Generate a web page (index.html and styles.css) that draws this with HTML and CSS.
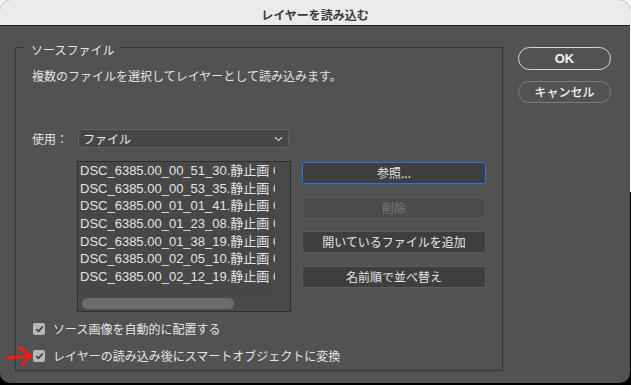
FILE: index.html
```html
<!DOCTYPE html>
<html lang="ja">
<head>
<meta charset="utf-8">
<title>レイヤーを読み込む</title>
<link rel="stylesheet" href="styles.css">
</head>
<body>
<div class="window">
  <header class="titlebar">レイヤーを読み込む</header>
  <div class="content">
    <fieldset class="source">
      <legend class="legend">ソースファイル</legend>
      <p class="desc">複数のファイルを選択してレイヤーとして読み込みます。</p>
      <div class="use-row">
        <span class="use-label">使用：</span>
        <div class="select">
          <span>ファイル</span>
          <svg class="chevron" width="9" height="6" viewBox="0 0 9 6"><path d="M1 1.2 L4.5 4.5 L8 1.2" fill="none" stroke="#cfcfcf" stroke-width="1.2"/></svg>
        </div>
      </div>
      <div class="files-row">
        <div class="filelist">
          <ul class="rows">
            <li>DSC_6385.00_00_51_30.静止画 001.jpg</li>
            <li>DSC_6385.00_00_53_35.静止画 002.jpg</li>
            <li>DSC_6385.00_01_01_41.静止画 003.jpg</li>
            <li>DSC_6385.00_01_23_08.静止画 004.jpg</li>
            <li>DSC_6385.00_01_38_19.静止画 005.jpg</li>
            <li>DSC_6385.00_02_05_10.静止画 006.jpg</li>
            <li>DSC_6385.00_02_12_19.静止画 007.jpg</li>
          </ul>
          <div class="vtrack"></div>
          <div class="htrack"><div class="thumb"></div></div>
        </div>
        <div class="file-buttons">
          <button class="btn focus">参照...</button>
          <button class="btn disabled">削除</button>
          <button class="btn">開いているファイルを追加</button>
          <button class="btn">名前順で並べ替え</button>
        </div>
      </div>
      <div class="checks">
        <label class="check"><span class="box"><svg width="9" height="8" viewBox="0 0 9 8"><path d="M1.2 4.2 L3.5 6.3 L7.8 1.5" fill="none" stroke="#3f3f3f" stroke-width="1.8"/></svg></span>ソース画像を自動的に配置する</label>
        <label class="check"><span class="box"><svg width="9" height="8" viewBox="0 0 9 8"><path d="M1.2 4.2 L3.5 6.3 L7.8 1.5" fill="none" stroke="#3f3f3f" stroke-width="1.8"/></svg></span>レイヤーの読み込み後にスマートオブジェクトに変換</label>
      </div>
    </fieldset>
    <div class="actions">
      <button class="pill ok">OK</button>
      <button class="pill cancel">キャンセル</button>
    </div>
  </div>
  <svg class="arrow" width="30" height="24" viewBox="0 0 30 24"><path d="M2 14 C10 13.5 18 12.5 26 11.5 M14 3.5 C18 6 22 9 26.5 11.5 C23 14 20 17 17.5 21" fill="none" stroke="#f21b1b" stroke-width="3" stroke-linecap="round" stroke-linejoin="round"/></svg>
</div>
</body>
</html>
```

FILE: styles.css
```css
* { box-sizing: border-box; }
html, body {
  margin: 0;
  padding: 0;
  width: 631px;
  height: 385px;
  overflow: hidden;
  background: linear-gradient(#f4f4f4 0 50%, #000 50% 100%);
}
body {
  font-family: "Noto Sans CJK JP", "Liberation Sans", sans-serif;
  color: #e2e2e2;
}
.window {
  position: relative;
  width: 630px;
  height: 383px;
  background: #525252;
  border-radius: 10px;
  overflow: hidden;
  display: flex;
  flex-direction: column;
}
.titlebar {
  height: 26px;
  flex: none;
  background: #ebebeb;
  border-bottom: 1px solid #1e1e1e;
  color: #3a3a3a;
  font-size: 12px;
  font-weight: 700;
  line-height: 25px;
  text-align: center;
  padding-top: 2px;
}
.content {
  display: flex;
  align-items: flex-start;
  padding: 11px 0 0 15px;
}
.source {
  margin: 0;
  width: 488px;
  height: 334px;
  border: 1px solid #363636;
  padding: 0 10px 0 16px;
  min-width: 0;
}
.legend {
  margin-left: -7px;
  padding: 6px 6px 0;
  font-size: 12px;
  line-height: 14px;
  color: #e6e6e6;
}
.desc {
  margin: 11px 0 0;
  font-size: 12px;
  line-height: 16px;
}
.use-row {
  display: flex;
  align-items: center;
  margin-top: 45px;
  height: 19px;
}
.use-label {
  width: 46px;
  font-size: 12px;
  line-height: 16px;
}
.select {
  width: 211px;
  height: 19px;
  background: #464646;
  border: 1px solid #626262;
  border-radius: 3px;
  display: flex;
  align-items: center;
  justify-content: space-between;
  padding: 0 5px 0 4px;
  font-size: 12px;
  line-height: 16px;
  color: #ececec;
}
.chevron { margin-top: 1px; }
.files-row {
  display: flex;
  margin-top: 13px;
  padding-left: 45px;
}
.filelist {
  width: 214px;
  height: 151px;
  border: 1px solid #2e2e2e;
  background: #474747;
  display: grid;
  grid-template-columns: 197px 15px;
  grid-template-rows: 1fr 16px;
}
.rows {
  list-style: none;
  margin: 0;
  padding: 0 0 0 2px;
  overflow: hidden;
  white-space: nowrap;
  font-family: "Liberation Sans", "Noto Sans CJK JP", sans-serif;
  font-size: 13px;
  line-height: 17.67px;
  color: #e4e4e4;
}
.rows li { overflow: hidden; }
.vtrack {
  grid-row: 1 / 3;
  grid-column: 2;
  background: #494949;
}
.htrack {
  grid-row: 2;
  grid-column: 1;
  background: #4a4a4a;
  padding: 3px 0 0 4px;
}
.thumb {
  width: 152px;
  height: 11px;
  border-radius: 6px;
  background: #6c6c6c;
}
.file-buttons {
  display: flex;
  flex-direction: column;
  gap: 12.67px;
  margin-left: 11px;
  padding-top: 1px;
}
.btn {
  width: 184px;
  height: 22px;
  margin: 0;
  padding: 0;
  background: #3e3e3e;
  border: 1px solid #5c5c5c;
  border-radius: 2px;
  color: #e6e6e6;
  font-family: "Noto Sans CJK JP", sans-serif;
  font-size: 12px;
  line-height: 16px;
}
.btn.focus { border-color: #1f74e6; }
.btn.disabled {
  background: #4c4c4c;
  border-color: #5a5a5a;
  color: #7a7a7a;
}
.checks {
  display: flex;
  flex-direction: column;
  gap: 9px;
  margin-top: 8px;
}
.check {
  display: flex;
  align-items: center;
  height: 18px;
  font-size: 12px;
  line-height: 16px;
  color: #e6e6e6;
}
.box {
  width: 12px;
  height: 12px;
  margin: 0 8px 0 1px;
  border-radius: 2px;
  background: #b8b8b8;
  display: flex;
  align-items: center;
  justify-content: center;
}
.actions {
  display: flex;
  flex-direction: column;
  gap: 11px;
  margin: 10px 0 0 15px;
}
.pill {
  width: 93px;
  height: 23px;
  margin: 0;
  padding: 0;
  border-radius: 12px;
  background: #525252;
  color: #f2f2f2;
  font-family: "Noto Sans CJK JP", sans-serif;
  font-size: 12px;
  font-weight: 500;
  line-height: 16px;
}
.pill.ok {
  border: 1.5px solid #d6d6d6;
  font-family: "Liberation Sans", sans-serif;
  font-size: 13px;
  font-weight: 700;
}
.pill.cancel {
  height: 22px;
  border: 1.5px solid #7c7c7c;
}
.arrow {
  position: absolute;
  left: 5px;
  top: 344px;
}
```
